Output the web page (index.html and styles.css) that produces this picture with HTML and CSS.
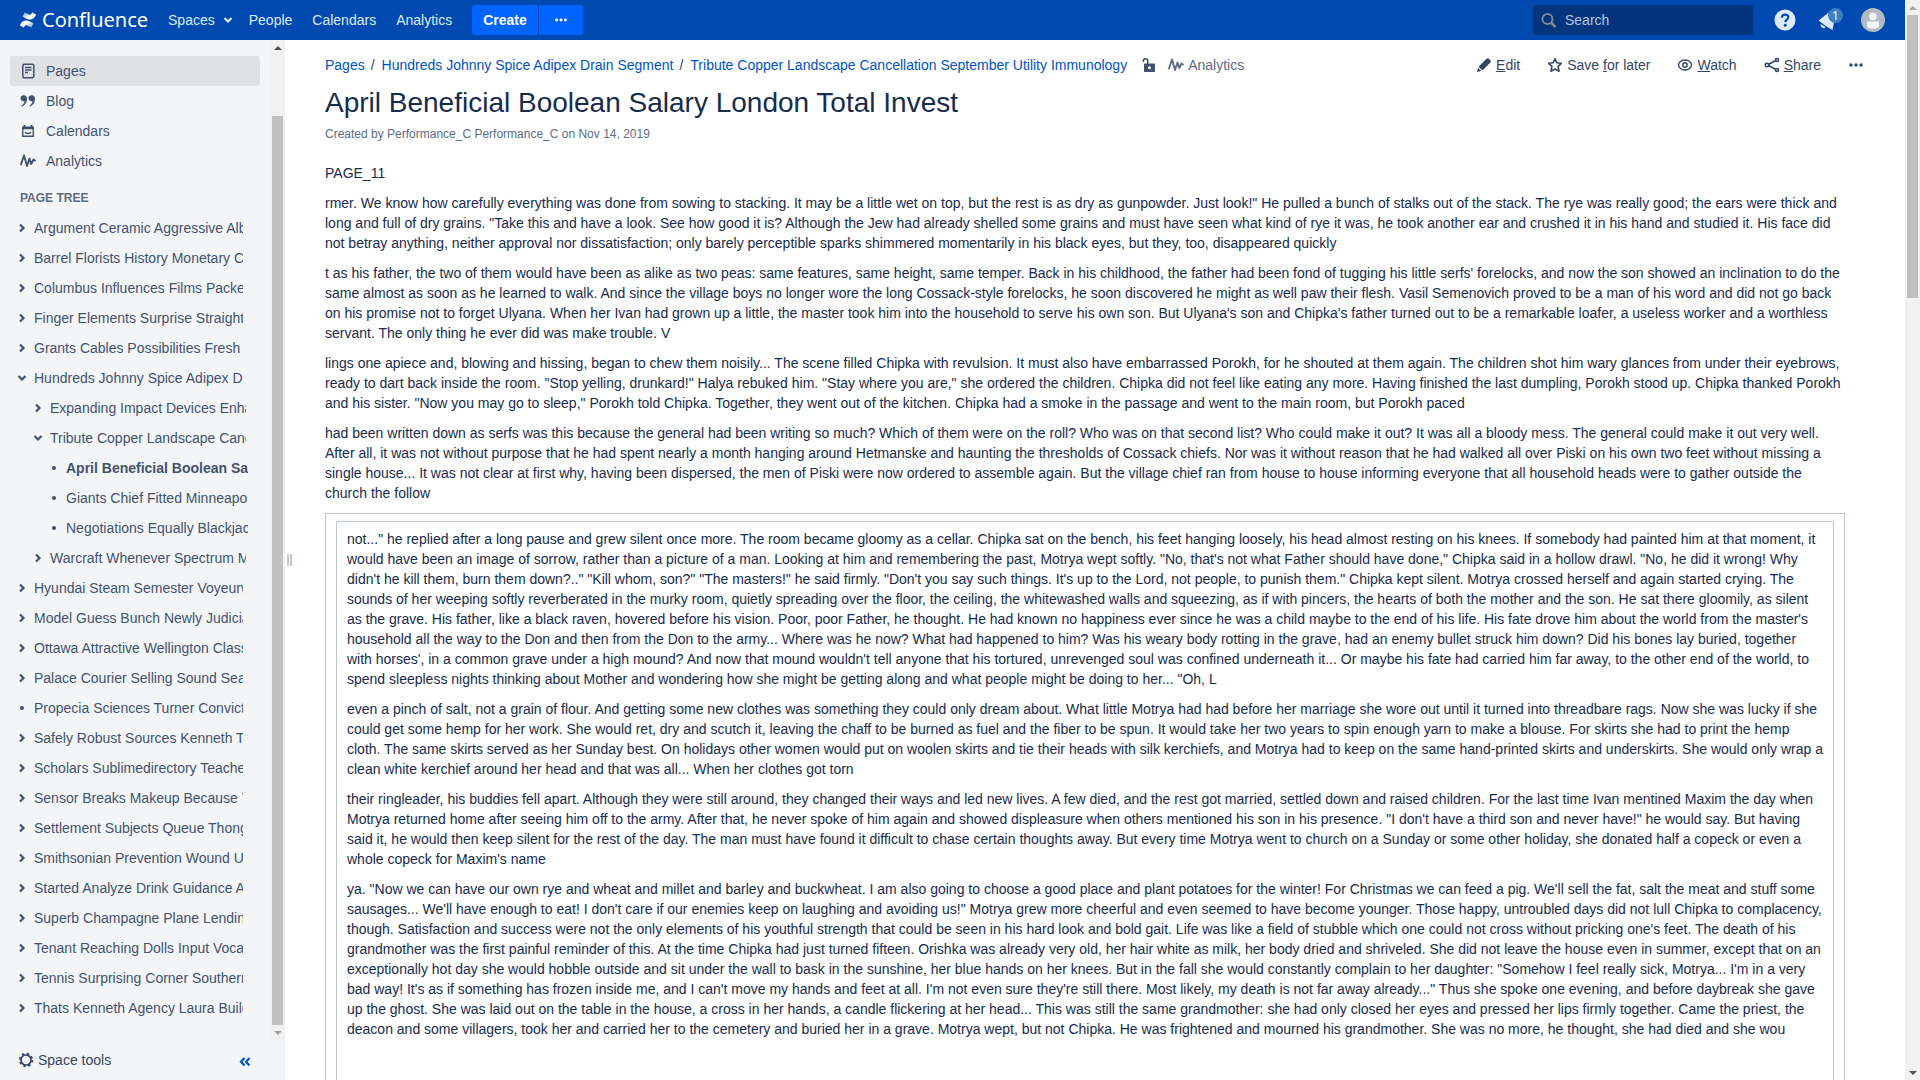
FILE: index.html
```html
<!DOCTYPE html>
<html lang="en">
<head>
<meta charset="utf-8">
<title>April Beneficial Boolean Salary London Total Invest - Confluence</title>
<link rel="stylesheet" href="styles.css">
</head>
<body>
<svg class="sprite" aria-hidden="true">
  <symbol id="right" viewBox="0 0 16 16"><path d="M6 4.5 9.5 8 6 11.5" fill="none" stroke="currentColor" stroke-width="2.2"/></symbol>
  <symbol id="down" viewBox="0 0 16 16"><path d="M4.5 6 8 9.5 11.5 6" fill="none" stroke="currentColor" stroke-width="2.2"/></symbol>
  <symbol id="dot" viewBox="0 0 16 16"><circle cx="8" cy="8" r="2" fill="currentColor"/></symbol>
  <symbol id="more" viewBox="0 0 16 16"><g fill="currentColor"><circle cx="3" cy="8" r="1.7"/><circle cx="8" cy="8" r="1.7"/><circle cx="13" cy="8" r="1.7"/></g></symbol>
  <symbol id="pulse" viewBox="0 0 16 16"><path d="M1 11.500 4 2.500 7 13 9.500 5.500 11.200 11 13.500 6.500 15 7.500" fill="none" stroke="currentColor" stroke-width="1.9" stroke-linejoin="round" stroke-linecap="round"/></symbol>
</svg>
<div class="window">
  <div class="app">
    <header class="topbar">
      <a class="logo" href="#">
        <svg width="16" height="16" viewBox="0 0 16 16" aria-hidden="true">
          <defs>
            <linearGradient id="g1" x1="1" y1="1" x2="0" y2="0"><stop offset="0" stop-color="#fff" stop-opacity=".45"/><stop offset=".6" stop-color="#fff"/></linearGradient>
            <linearGradient id="g2" x1="0" y1="0" x2="1" y2="1"><stop offset="0" stop-color="#fff" stop-opacity=".45"/><stop offset=".6" stop-color="#fff"/></linearGradient>
          </defs>
          <path fill="url(#g1)" d="M.7 11.700 0 12.900c-.1.300 0 .5.200.7l3 1.800c.3.200.6.100.8-.2 1.200-2 1.700-2.400 4-1.300l3 1.400c.3.200.6 0 .7-.2l1.500-3.300c.1-.3 0-.6-.3-.7L10 9.600C6 7.700 3.300 7.800.7 11.700z"/>
          <path fill="url(#g2)" d="m15.300 4.300.7-1.200c.1-.3 0-.5-.2-.7l-3-1.800c-.3-.2-.6-.1-.8.2-1.200 2-1.700 2.400-4 1.300L5 .7C4.700.5 4.400.7 4.300.9L2.800 4.200c-.1.300 0 .6.300.7L6 6.400c4 1.900 6.700 1.800 9.300-2.100z"/>
        </svg>
        <span>Confluence</span>
      </a>
      <nav class="topnav">
        <a class="has-menu" href="#">Spaces <svg class="icon" aria-hidden="true"><use href="#down"/></svg></a>
        <a href="#">People</a>
        <a href="#">Calendars</a>
        <a href="#">Analytics</a>
      </nav>
      <div class="create">
        <button class="create-main" type="button">Create</button>
        <button class="create-more" type="button" aria-label="Create from template"><svg class="icon" aria-hidden="true"><use href="#more"/></svg></button>
      </div>
      <label class="search">
        <svg class="icon" viewBox="0 0 16 16" aria-hidden="true"><g fill="none" stroke="#7f8795" stroke-width="2"><circle cx="6.500" cy="7" r="5"/><path d="m10 10.500 4.500 4.500" stroke-width="2.600"/></g></svg>
        <input type="text" placeholder="Search" aria-label="Search">
      </label>
      <button class="tool" type="button" aria-label="Help">
        <svg width="24" height="24" viewBox="0 0 24 24" aria-hidden="true"><circle cx="12" cy="12" r="10.500" fill="#deebff"/><path d="M8.900 9.800c0-4.400 6.400-4.100 6.400-.5 0 2.300-3 2.400-3 5" fill="none" stroke="#0049b0" stroke-width="2.200"/><circle cx="12.200" cy="17.200" r="1.500" fill="#0049b0"/></svg>
      </button>
      <button class="tool notify" type="button" aria-label="Notifications">
        <svg width="24" height="24" viewBox="0 0 24 24" aria-hidden="true"><path d="M1.500 12.500 13 3.500 17 14 15.500 22 9.500 18.500z" fill="#deebff"/><path d="m3.500 16 5 3-1.500 1.500-3-1.500z" fill="#deebff"/></svg>
        <span class="badge">1</span>
      </button>
      <button class="tool" type="button" aria-label="Profile">
        <svg width="24" height="24" viewBox="0 0 24 24" aria-hidden="true"><circle cx="12" cy="12" r="12" fill="#b3bac5"/><circle cx="12" cy="8.500" r="3.800" fill="#f4f5f7"/><path d="M6 13.500h12v4c0 2-1.500 3.200-3.500 3.200h-5C7.500 20.700 6 19.500 6 17.500z" fill="#f4f5f7"/></svg>
      </button>
    </header>
    <div class="body">
      <aside class="sidebar">
        <div class="scroller">
          <div class="side-content">
            <nav class="shortcuts">
              <a class="active" href="#"><svg class="icon" viewBox="0 0 16 16" aria-hidden="true"><rect x="2.800" y="1.300" width="11" height="13.500" rx="1.500" fill="none" stroke="currentColor" stroke-width="1.500"/><path d="M5 4.500h6.500M5 7h6.500M5 9.500h3" stroke="currentColor" stroke-width="1.300"/></svg>Pages</a>
              <a href="#"><svg class="icon" viewBox="0 0 16 16" aria-hidden="true"><path d="M3.800 2.200A3 3 0 1 0 4.500 8c-.2 2-1.300 3.500-3 4.700l.6 1C5.200 12 7 9.500 7 6.200 7 3.700 5.800 2.200 3.800 2.200z" fill="currentColor"/><path d="M11.800 2.200a3 3 0 1 0 .7 5.800c-.2 2-1.300 3.500-3 4.700l.6 1C13.200 12 15 9.500 15 6.200c0-2.500-1.200-4-3.200-4z" fill="currentColor"/></svg>Blog</a>
              <a href="#"><svg class="icon" viewBox="0 0 16 16" aria-hidden="true"><path d="M2.700 5v8.300h10.600V5M5 9.200c1.200 1.800 4.800 1.800 6 0" fill="none" stroke="currentColor" stroke-width="1.400"/><path d="M2 3.500h1.500V2h2v1.500h5V2h2v1.500H14v2.800H2z" fill="currentColor"/></svg>Calendars</a>
              <a href="#"><svg class="icon" aria-hidden="true"><use href="#pulse"/></svg>Analytics</a>
            </nav>
            <h2 class="tree-title">Page tree</h2>
            <ul class="tree">
              <li><div class="row"><button type="button" aria-label="Expand"><svg class="icon"><use href="#right"/></svg></button><a href="#">Argument Ceramic Aggressive Alb</a></div></li>
              <li><div class="row"><button type="button" aria-label="Expand"><svg class="icon"><use href="#right"/></svg></button><a href="#">Barrel Florists History Monetary C</a></div></li>
              <li><div class="row"><button type="button" aria-label="Expand"><svg class="icon"><use href="#right"/></svg></button><a href="#">Columbus Influences Films Packe</a></div></li>
              <li><div class="row"><button type="button" aria-label="Expand"><svg class="icon"><use href="#right"/></svg></button><a href="#">Finger Elements Surprise Straight</a></div></li>
              <li><div class="row"><button type="button" aria-label="Expand"><svg class="icon"><use href="#right"/></svg></button><a href="#">Grants Cables Possibilities Fresh</a></div></li>
              <li><div class="row"><button type="button" aria-label="Collapse"><svg class="icon"><use href="#down"/></svg></button><a href="#">Hundreds Johnny Spice Adipex D</a></div>
                <ul class="branch">
                  <li><div class="row"><button type="button" aria-label="Expand"><svg class="icon"><use href="#right"/></svg></button><a href="#">Expanding Impact Devices Enha</a></div></li>
                  <li><div class="row"><button type="button" aria-label="Collapse"><svg class="icon"><use href="#down"/></svg></button><a href="#">Tribute Copper Landscape Canc</a></div>
                    <ul class="branch">
                      <li><div class="row"><svg class="icon"><use href="#dot"/></svg><a class="current" href="#">April Beneficial Boolean Sa</a></div></li>
                      <li><div class="row"><svg class="icon"><use href="#dot"/></svg><a href="#">Giants Chief Fitted Minneapo</a></div></li>
                      <li><div class="row"><svg class="icon"><use href="#dot"/></svg><a href="#">Negotiations Equally Blackjac</a></div></li>
                    </ul>
                  </li>
                  <li><div class="row"><button type="button" aria-label="Expand"><svg class="icon"><use href="#right"/></svg></button><a href="#">Warcraft Whenever Spectrum M</a></div></li>
                </ul>
              </li>
              <li><div class="row"><button type="button" aria-label="Expand"><svg class="icon"><use href="#right"/></svg></button><a href="#">Hyundai Steam Semester Voyeurw</a></div></li>
              <li><div class="row"><button type="button" aria-label="Expand"><svg class="icon"><use href="#right"/></svg></button><a href="#">Model Guess Bunch Newly Judicia</a></div></li>
              <li><div class="row"><button type="button" aria-label="Expand"><svg class="icon"><use href="#right"/></svg></button><a href="#">Ottawa Attractive Wellington Class</a></div></li>
              <li><div class="row"><button type="button" aria-label="Expand"><svg class="icon"><use href="#right"/></svg></button><a href="#">Palace Courier Selling Sound Sea</a></div></li>
              <li><div class="row"><svg class="icon"><use href="#dot"/></svg><a href="#">Propecia Sciences Turner Convict</a></div></li>
              <li><div class="row"><button type="button" aria-label="Expand"><svg class="icon"><use href="#right"/></svg></button><a href="#">Safely Robust Sources Kenneth T</a></div></li>
              <li><div class="row"><button type="button" aria-label="Expand"><svg class="icon"><use href="#right"/></svg></button><a href="#">Scholars Sublimedirectory Teache</a></div></li>
              <li><div class="row"><button type="button" aria-label="Expand"><svg class="icon"><use href="#right"/></svg></button><a href="#">Sensor Breaks Makeup Because Y</a></div></li>
              <li><div class="row"><button type="button" aria-label="Expand"><svg class="icon"><use href="#right"/></svg></button><a href="#">Settlement Subjects Queue Thong</a></div></li>
              <li><div class="row"><button type="button" aria-label="Expand"><svg class="icon"><use href="#right"/></svg></button><a href="#">Smithsonian Prevention Wound U</a></div></li>
              <li><div class="row"><button type="button" aria-label="Expand"><svg class="icon"><use href="#right"/></svg></button><a href="#">Started Analyze Drink Guidance A</a></div></li>
              <li><div class="row"><button type="button" aria-label="Expand"><svg class="icon"><use href="#right"/></svg></button><a href="#">Superb Champagne Plane Lendin</a></div></li>
              <li><div class="row"><button type="button" aria-label="Expand"><svg class="icon"><use href="#right"/></svg></button><a href="#">Tenant Reaching Dolls Input Voca</a></div></li>
              <li><div class="row"><button type="button" aria-label="Expand"><svg class="icon"><use href="#right"/></svg></button><a href="#">Tennis Surprising Corner Southern</a></div></li>
              <li><div class="row"><button type="button" aria-label="Expand"><svg class="icon"><use href="#right"/></svg></button><a href="#">Thats Kenneth Agency Laura Build</a></div></li>
            </ul>
          </div>
          <div class="scrollbar side-bar" aria-hidden="true">
            <span class="arrow up dark"></span><span class="thumb"></span><span class="arrow down"></span>
          </div>
        </div>
        <div class="side-foot">
          <button type="button" class="tools"><svg class="icon" viewBox="0 0 16 16" aria-hidden="true"><circle cx="8" cy="8" r="5" fill="none" stroke="currentColor" stroke-width="1.700"/><circle cx="8" cy="8" r="6.300" fill="none" stroke="currentColor" stroke-width="1.800" stroke-dasharray="2.470 2.470"/></svg>Space tools</button>
          <button type="button" class="collapse" aria-label="Collapse sidebar"><svg class="icon" viewBox="0 0 16 16" aria-hidden="true"><path d="M7.500 6 4 9.800l3.500 3.800M12.500 6 9 9.800l3.500 3.800" fill="none" stroke="currentColor" stroke-width="2.200"/></svg></button>
        </div>
      </aside>
      <div class="grip" aria-hidden="true"><span></span></div>
      <main class="page">
        <div class="page-top">
          <nav class="crumbs">
            <a href="#">Pages</a><span>/</span><a href="#">Hundreds Johnny Spice Adipex Drain Segment</a><span>/</span><a href="#">Tribute Copper Landscape Cancellation September Utility Immunology</a>
          </nav>
          <button class="restrict" type="button" aria-label="Unrestricted"><svg class="icon" viewBox="0 0 16 16" aria-hidden="true"><path d="M2.300 5V4c0-3 4.400-3 4.400 0v3" fill="none" stroke="currentColor" stroke-width="1.500"/><path fill-rule="evenodd" d="M4 6.500h9c.6 0 1 .4 1 1V14c0 .6-.4 1-1 1H4c-.6 0-1-.4-1-1V7.500c0-.6.4-1 1-1zm4.500 2.700a1.500 1.500 0 1 0 .001 0z" fill="currentColor"/></svg></button>
          <a class="stats" href="#"><svg class="icon" aria-hidden="true"><use href="#pulse"/></svg>Analytics</a>
          <div class="actions">
            <button type="button"><svg class="icon" viewBox="0 0 16 16" aria-hidden="true"><path d="m1 15 1-4.200 3.200 3.200zM2.600 9.800 10.200 2c1-1 2-1 2.800-.2l1.200 1.200c.9.900.8 1.900 0 2.700L6.400 13.500z" fill="currentColor"/></svg><span><u>E</u>dit</span></button>
            <button type="button"><svg class="icon" viewBox="0 0 16 16" aria-hidden="true"><path d="m8 1.800 1.900 4 4.400.5-3.200 3 .9 4.900L8 12l-4 2.200.9-4.900-3.200-3 4.400-.5z" fill="none" stroke="currentColor" stroke-width="1.600" stroke-linejoin="round"/></svg><span>Save <u>f</u>or later</span></button>
            <button type="button"><svg class="icon" viewBox="0 0 16 16" aria-hidden="true"><g fill="none" stroke="currentColor" stroke-width="1.400"><ellipse cx="8" cy="8" rx="6.500" ry="5"/><circle cx="8" cy="8" r="2.200"/></g></svg><span><u>W</u>atch</span></button>
            <button type="button"><svg class="icon" viewBox="0 0 16 16" aria-hidden="true"><g fill="none" stroke="currentColor" stroke-width="1.600"><circle cx="3" cy="8" r="1.700"/><circle cx="13" cy="3" r="1.500"/><circle cx="13" cy="13" r="1.500"/><path d="m4.700 7.200 6.800-3.500M4.700 8.800l6.800 3.500"/></g></svg><span><u>S</u>hare</span></button>
            <button type="button" aria-label="More actions"><svg class="icon" aria-hidden="true"><use href="#more"/></svg></button>
          </div>
        </div>
        <h1>April Beneficial Boolean Salary London Total Invest</h1>
        <p class="meta">Created by Performance_C Performance_C on Nov 14, 2019</p>
        <article class="content">
          <p>PAGE_11</p>
          <p>rmer. We know how carefully everything was done from sowing to stacking. It may be a little wet on top, but the rest is as dry as gunpowder. Just look!" He pulled a bunch of stalks out of the stack. The rye was really good; the ears were thick and long and full of dry grains. "Take this and have a look. See how good it is? Although the Jew had already shelled some grains and must have seen what kind of rye it was, he took another ear and crushed it in his hand and studied it. His face did not betray anything, neither approval nor dissatisfaction; only barely perceptible sparks shimmered momentarily in his black eyes, but they, too, disappeared quickly</p>
          <p>t as his father, the two of them would have been as alike as two peas: same features, same height, same temper. Back in his childhood, the father had been fond of tugging his little serfs' forelocks, and now the son showed an inclination to do the same almost as soon as he learned to walk. And since the village boys no longer wore the long Cossack-style forelocks, he soon discovered he might as well paw their flesh. Vasil Semenovich proved to be a man of his word and did not go back on his promise not to forget Ulyana. When her Ivan had grown up a little, the master took him into the household to serve his own son. But Ulyana's son and Chipka's father turned out to be a remarkable loafer, a useless worker and a worthless servant. The only thing he ever did was make trouble. V</p>
          <p>lings one apiece and, blowing and hissing, began to chew them noisily... The scene filled Chipka with revulsion. It must also have embarrassed Porokh, for he shouted at them again. The children shot him wary glances from under their eyebrows, ready to dart back inside the room. "Stop yelling, drunkard!" Halya rebuked him. "Stay where you are," she ordered the children. Chipka did not feel like eating any more. Having finished the last dumpling, Porokh stood up. Chipka thanked Porokh and his sister. "Now you may go to sleep," Porokh told Chipka. Together, they went out of the kitchen. Chipka had a smoke in the passage and went to the main room, but Porokh paced</p>
          <p>had been written down as serfs was this because the general had been writing so much? Which of them were on the roll? Who was on that second list? Who could make it out? It was all a bloody mess. The general could make it out very well. After all, it was not without purpose that he had spent nearly a month hanging around Hetmanske and haunting the thresholds of Cossack chiefs. Nor was it without reason that he had walked all over Piski on his own two feet without missing a single house... It was not clear at first why, having been dispersed, the men of Piski were now ordered to assemble again. But the village chief ran from house to house informing everyone that all household heads were to gather outside the church the follow</p>
          <section class="layout">
            <div class="cell">
              <p>not..." he replied after a long pause and grew silent once more. The room became gloomy as a cellar. Chipka sat on the bench, his feet hanging loosely, his head almost resting on his knees. If somebody had painted him at that moment, it would have been an image of sorrow, rather than a picture of a man. Looking at him and remembering the past, Motrya wept softly. "No, that's not what Father should have done," Chipka said in a hollow drawl. "No, he did it wrong! Why didn't he kill them, burn them down?.." "Kill whom, son?" "The masters!" he said firmly. "Don't you say such things. It's up to the Lord, not people, to punish them." Chipka kept silent. Motrya crossed herself and again started crying. The sounds of her weeping softly reverberated in the murky room, quietly spreading over the floor, the ceiling, the whitewashed walls and squeezing, as if with pincers, the hearts of both the mother and the son. He sat there gloomily, as silent as the grave. His father, like a black raven, hovered before his vision. Poor, poor Father, he thought. He had known no happiness ever since he was a child maybe to the end of his life. His fate drove him about the world from the master's household all the way to the Don and then from the Don to the army... Where was he now? What had happened to him? Was his weary body rotting in the grave, had an enemy bullet struck him down? Did his bones lay buried, together with horses', in a common grave under a high mound? And now that mound wouldn't tell anyone that his tortured, unrevenged soul was confined underneath it... Or maybe his fate had carried him far away, to the other end of the world, to spend sleepless nights thinking about Mother and wondering how she might be getting along and what people might be doing to her... "Oh, L</p>
              <p>even a pinch of salt, not a grain of flour. And getting some new clothes was something they could only dream about. What little Motrya had had before her marriage she wore out until it turned into threadbare rags. Now she was lucky if she could get some hemp for her work. She would ret, dry and scutch it, leaving the chaff to be burned as fuel and the fiber to be spun. It would take her two years to spin enough yarn to make a blouse. For skirts she had to print the hemp cloth. The same skirts served as her Sunday best. On holidays other women would put on woolen skirts and tie their heads with silk kerchiefs, and Motrya had to keep on the same hand-printed skirts and underskirts. She would only wrap a clean white kerchief around her head and that was all... When her clothes got torn</p>
              <p>their ringleader, his buddies fell apart. Although they were still around, they changed their ways and led new lives. A few died, and the rest got married, settled down and raised children. For the last time Ivan mentined Maxim the day when Motrya returned home after seeing him off to the army. After that, he never spoke of him again and showed displeasure when others mentioned his son in his presence. "I don't have a third son and never have!" he would say. But having said it, he would then keep silent for the rest of the day. The man must have found it difficult to chase certain thoughts away. But every time Motrya went to church on a Sunday or some other holiday, she donated half a copeck or even a whole copeck for Maxim's name</p>
              <p>ya. "Now we can have our own rye and wheat and millet and barley and buckwheat. I am also going to choose a good place and plant potatoes for the winter! For Christmas we can feed a pig. We'll sell the fat, salt the meat and stuff some sausages... We'll have enough to eat! I don't care if our enemies keep on laughing and avoiding us!" Motrya grew more cheerful and even seemed to have become younger. Those happy, untroubled days did not lull Chipka to complacency, though. Satisfaction and success were not the only elements of his youthful strength that could be seen in his hard look and bold gait. Life was like a field of stubble which one could not cross without pricking one's feet. The death of his grandmother was the first painful reminder of this. At the time Chipka had just turned fifteen. Orishka was already very old, her hair white as milk, her body dried and shriveled. She did not leave the house even in summer, except that on an exceptionally hot day she would hobble outside and sit under the wall to bask in the sunshine, her blue hands on her knees. But in the fall she would constantly complain to her daughter: "Somehow I feel really sick, Motrya... I'm in a very bad way! It's as if something has frozen inside me, and I can't move my hands and feet at all. I'm not even sure they're still there. Most likely, my death is not far away already..." Thus she spoke one evening, and before daybreak she gave up the ghost. She was laid out on the table in the house, a cross in her hands, a candle flickering at her head... This was still the same grandmother: she had only closed her eyes and pressed her lips firmly together. Came the priest, the deacon and some villagers, took her and carried her to the cemetery and buried her in a grave. Motrya wept, but not Chipka. He was frightened and mourned his grandmother. She was no more, he thought, she had died and she wou</p>
            </div>
          </section>
        </article>
      </main>
    </div>
  </div>
  <div class="scrollbar page-bar" aria-hidden="true">
    <span class="arrow up"></span><span class="thumb"></span><span class="arrow down dark"></span>
  </div>
</div>
</body>
</html>
```
FILE: styles.css
```css
* { box-sizing: border-box; }
body {
  margin: 0;
  font: 14px/20px "Liberation Sans", Arial, sans-serif;
  color: #172b4d;
  background: #fff;
}
a { color: #0052cc; text-decoration: none; }
button {
  font: inherit;
  color: inherit;
  background: none;
  border: 0;
  padding: 0;
  display: flex;
  align-items: center;
}
ul { list-style: none; margin: 0; padding: 0; }
.sprite { display: none; }
.icon { width: 16px; height: 16px; flex: none; display: block; }

.window { display: flex; height: 100vh; overflow: hidden; }
.app { flex: 1; min-width: 0; display: flex; flex-direction: column; }
.body { flex: 1; min-height: 0; display: flex; }

/* Top bar */
.topbar {
  display: flex;
  align-items: center;
  height: 40px;
  flex: none;
  padding: 0 20px;
  background: #0049b0;
  color: #deebff;
}
.logo { display: flex; align-items: center; gap: 6px; color: #fff; }
.logo span { font: 20px/30px "Noto Sans", sans-serif; }
.topnav { display: flex; gap: 20px; margin-left: 20px; }
.topnav a { display: flex; align-items: center; gap: 5px; color: #deebff; }
.topnav .has-menu { margin-right: -7px; }
.create { display: flex; gap: 1px; margin-left: 20px; }
.create button { height: 30px; background: #0065ff; color: #fff; justify-content: center; }
.create .create-main { padding: 0 11px; font-weight: bold; border-radius: 3px 0 0 3px; }
.create-more { width: 44px; border-radius: 0 3px 3px 0; }
.create-more .icon { width: 14px; }
.search {
  display: flex;
  align-items: center;
  gap: 8px;
  width: 220px;
  height: 30px;
  padding: 0 8px;
  margin-left: auto;
  margin-right: 20px;
  border-radius: 3px;
  background: #04347c;
}
.search input {
  flex: 1;
  min-width: 0;
  border: 0;
  padding: 0;
  background: none;
  font: inherit;
  color: #deebff;
}
.search input::placeholder { color: #b2c4e0; opacity: 1; }
.tool + .tool { margin-left: 20px; }
.notify { position: relative; }
.badge {
  position: absolute;
  left: 11px;
  top: 0;
  width: 15px;
  height: 15px;
  border-radius: 8px;
  background: #3b7fc4;
  color: #fff;
  font: 12px/15px "Noto Sans", sans-serif;
  text-align: center;
}

/* Sidebar */
.sidebar { width: 285px; flex: none; display: flex; flex-direction: column; background: #f4f5f7; color: #42526e; }
.scroller { flex: 1; min-height: 0; display: flex; }
.side-content { flex: 1; min-width: 0; overflow: hidden; padding-top: 16px; }
.shortcuts { padding: 0 10px; }
.shortcuts a {
  display: flex;
  align-items: center;
  gap: 10px;
  height: 30px;
  padding: 0 10px;
  border-radius: 3px;
  color: #42526e;
}
.shortcuts .active { background: #dfe1e5; }
.tree-title { margin: 12px 20px 5px; font-size: 12px; line-height: 20px; text-transform: uppercase; color: #5e6c84; }
.tree { margin: 0 27px 0 14px; }
.branch { margin: 0 -3px 0 16px; }
.branch .branch { margin-right: -2px; }
.row { display: flex; align-items: center; gap: 4px; height: 30px; }
.row a { flex: 1; min-width: 0; overflow: hidden; white-space: nowrap; color: #42526e; }
.row .current { font-weight: bold; }
.side-foot { display: flex; align-items: center; justify-content: space-between; height: 40px; flex: none; padding: 0 32px 0 18px; color: #344563; }
.tools { gap: 4px; }
.collapse { color: #0052cc; }

/* Scroll bars */
.scrollbar { display: flex; flex-direction: column; align-items: center; width: 15px; flex: none; background: #f1f1f1; }
.arrow { height: 15px; display: flex; align-items: center; color: #a3a3a3; }
.arrow::before { content: ""; border: 4px solid transparent; }
.arrow.up::before { border-top: 0; border-bottom-color: currentColor; }
.arrow.down::before { border-bottom: 0; border-top-color: currentColor; }
.arrow.dark { color: #505050; }
.thumb { width: 11px; background: #c1c1c1; }
.side-bar .thumb { margin-top: 61px; flex: 1; }
.page-bar .thumb { height: 283px; margin-bottom: auto; }

/* Page */
.grip { display: flex; align-items: center; width: 10px; flex: none; }
.grip span { width: 5px; height: 12px; margin-left: 2px; border: solid #c1c7d0; border-width: 0 2px; }
.page { flex: 1; min-width: 0; overflow: hidden; padding: 10px 60px 0 30px; }
.page-top { display: flex; align-items: center; height: 30px; margin-right: -30px; color: #42526e; }
.crumbs { display: flex; gap: 6px; color: #344563; }
.crumbs span { margin-right: 1px; }
.restrict { margin-left: 14px; }
.stats { display: flex; align-items: center; gap: 4px; margin-left: 11px; color: #5e6c84; }
.actions { display: flex; gap: 27px; margin-left: auto; padding-right: 11px; color: #344563; }
.actions button { gap: 4px; }
h1 { margin: 8px 0 0; font-size: 28px; line-height: 30px; font-weight: normal; }
.meta { margin: 6px 0 0; font-size: 12px; line-height: 20px; color: #5e6c84; }
.content { margin-top: 19px; }
.content p { margin: 0 0 10px; }
.layout { border: 1px solid #c1c7d0; padding: 7px 10px; }
.cell { border: 1px solid #c1c7d0; padding: 7px 10px 200px; }
```
